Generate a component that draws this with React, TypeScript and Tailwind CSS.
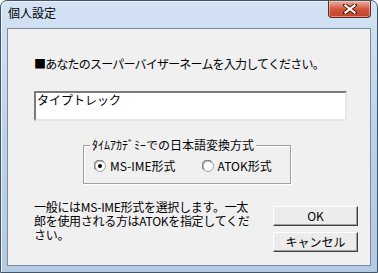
import React from "react";

const F = { fontFamily: '"Noto Sans CJK JP", "Noto Sans", sans-serif' };

function Radio({ checked }: { checked?: boolean }) {
  return (
    <svg width="12" height="12" viewBox="0 0 12 12" className="shrink-0">
      <circle cx="6" cy="6" r="5.5" fill="#ffffff" stroke="#a0a0a0" />
      <path d="M1.6 9.6 A5 5 0 0 1 9.6 1.6" fill="none" stroke="#6a6a6a" strokeWidth="1" />
      <path d="M2.6 8.8 A4 4 0 0 1 8.8 2.6" fill="none" stroke="#9a9a9a" strokeWidth="0.8" />
      {checked && <circle cx="6" cy="6" r="2" fill="#000000" />}
    </svg>
  );
}

function CloseX() {
  return (
    <svg width="14" height="10" viewBox="0 0 14 10">
      <path d="M2 1 L12 9 M12 1 L2 9" stroke="#4a1a10" strokeWidth="4" strokeLinecap="square" />
      <path d="M2.5 1.5 L11.5 8.5 M11.5 1.5 L2.5 8.5" stroke="#ffffff" strokeWidth="2.2" strokeLinecap="square" />
    </svg>
  );
}

function Btn({ children }: { children: React.ReactNode }) {
  return (
    <div className="w-[85px] h-[20px] bg-[#ececec] border border-t-white border-l-white border-r-[#404040] border-b-[#404040] shadow-[inset_-1px_-1px_0_#a0a0a0] flex items-center justify-center text-[12px] leading-[14px] text-black">
      {children}
    </div>
  );
}

export default function App() {
  return (
    <div className="w-[378px] h-[273px] overflow-hidden" style={F}>
      <div className="w-[378px] h-[273px] flex flex-col border border-[#465566] rounded-t-[7px] bg-gradient-to-b from-[#d3e3f4] via-[#bcd2ea] to-[#b2cae4] shadow-[inset_1px_1px_0_#eaf2fb]">
        <div className="h-[27px] flex items-start justify-between pl-[7px] pr-[6px]">
          <div className="pt-[5px] text-[12px] leading-[14px] text-black">個人設定</div>
          <div className="w-[43px] h-[17px] rounded-b-[4px] border border-t-0 border-[#5b2a22] bg-gradient-to-b from-[#eab0a0] via-[#d0553a] to-[#c0402a] flex items-center justify-center shadow-[inset_0_0_0_1px_rgba(255,220,200,0.5)]">
            <CloseX />
          </div>
        </div>
        <div className="mx-[6px] mb-[6px] flex-1 border border-[#7b8b9d] bg-[#f0f0f0] flex flex-col pl-[26px] pt-[28px] text-black text-[12px]">
          <div className="leading-[14px] tracking-[-0.8px]">■あなたのスーパーバイザーネームを入力してください。</div>
          <div className="mt-[20px] w-[313px] h-[30px] bg-white border-2 border-t-[#7a7a7a] border-l-[#7a7a7a] border-b-[#e6e6e6] border-r-[#e6e6e6] pl-[1px] leading-[14px]">
            タイプトレック
          </div>
          <div className="mt-[24px] ml-[49px] w-[208px] h-[39px] relative border border-[#a0a0a0] shadow-[inset_1px_1px_0_#ffffff,1px_1px_0_#ffffff] flex items-center pl-[10px] pt-[2px]">
            <div className="absolute -top-[8px] left-[6px] px-[2px] bg-[#f0f0f0] leading-[14px]">ﾀｲﾑｱｶﾃﾞﾐｰでの日本語変換方式</div>
            <div className="flex items-center gap-[4px] leading-[14px]">
              <Radio checked />
              <span>MS-IME形式</span>
            </div>
            <div className="flex items-center gap-[4px] ml-[26px] leading-[14px]">
              <Radio />
              <span>ATOK形式</span>
            </div>
          </div>
          <div className="mt-[16px] flex items-start pr-[12px]">
            <div className="flex-1 leading-[14px] tracking-[-0.3px]">
              一般にはMS-IME形式を選択します。一太<br />郎を使用される方はATOKを指定してくだ<br />さい。
            </div>
            <div className="mt-[6px] flex flex-col gap-[6px]">
              <Btn>OK</Btn>
              <Btn>キャンセル</Btn>
            </div>
          </div>
        </div>
      </div>
    </div>
  );
}
